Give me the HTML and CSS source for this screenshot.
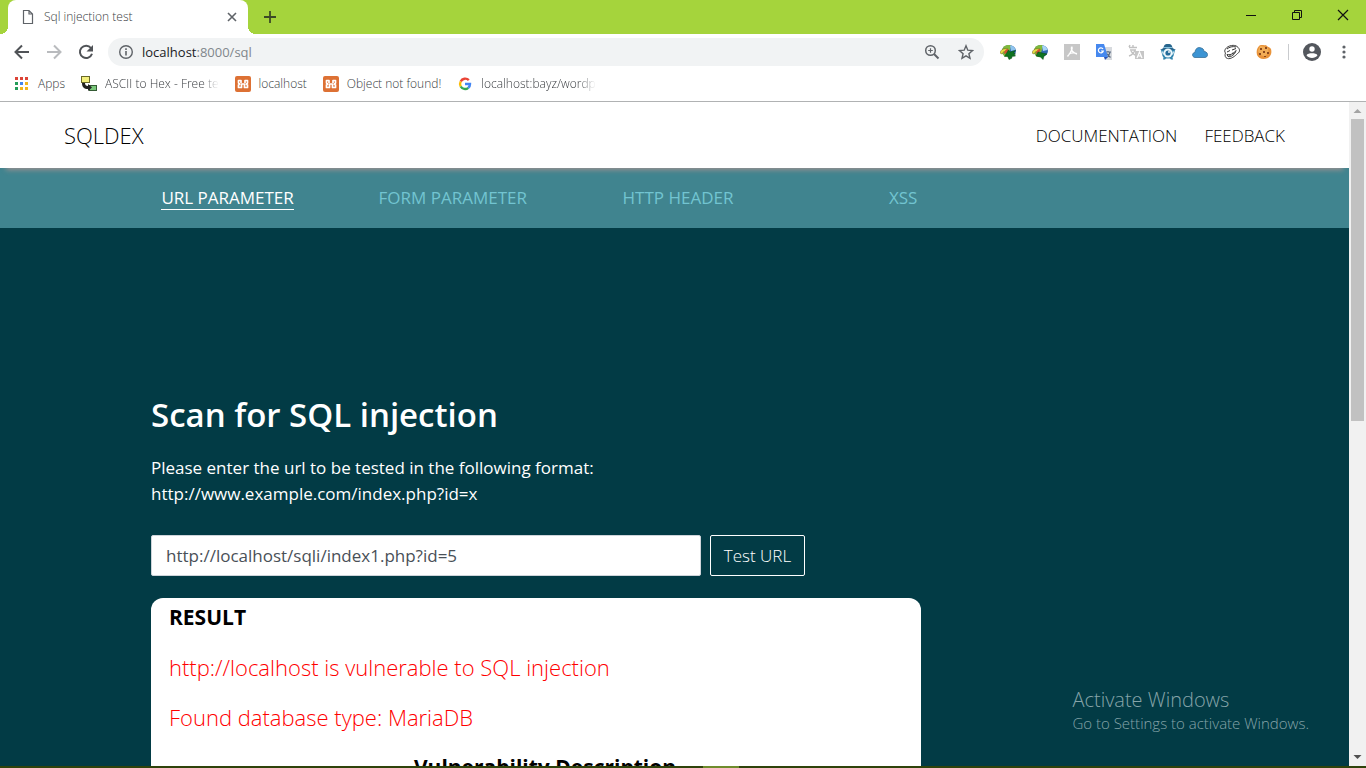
FILE: index.html
```html
<!DOCTYPE html>
<html lang="en">
<head>
<meta charset="utf-8">
<title>Sql injection test</title>
<link rel="stylesheet" href="styles.css">
</head>
<body>
<div class="titlebar">
  <div class="tab">
    <svg class="tab-file" viewBox="0 0 12 16"><path d="M1.500 1.500h5.500l3.500 3.500v9.500h-9zM7 1.500v3.500h3.500" fill="none" stroke="#5f6368" stroke-width="1.200"/></svg>
    <span class="tab-title">Sql injection test</span>
    <button class="tab-close" aria-label="Close tab"><svg viewBox="0 0 16 16"><path d="M4 4l8 8M12 4l-8 8" stroke="#5f6368" stroke-width="1.600"/></svg></button>
  </div>
  <button class="new-tab" aria-label="New tab"><svg viewBox="0 0 16 16"><path d="M8 2v12M2 8h12" stroke="#3c4a26" stroke-width="1.800"/></svg></button>
  <div class="window-buttons">
    <button aria-label="Minimize"><svg viewBox="0 0 16 16"><path d="M3 8.500h10" stroke="#111"/></svg></button>
    <button aria-label="Restore"><svg viewBox="0 0 16 16"><path d="M3.500 5.500h7v7h-7zM5.500 5.500v-2h7v7h-2" fill="none" stroke="#111"/></svg></button>
    <button aria-label="Close"><svg viewBox="0 0 16 16"><path d="M3 3l10 10M13 3L3 13" stroke="#111" stroke-width="1.200"/></svg></button>
  </div>
</div>

<div class="toolbar">
  <button class="tool" aria-label="Back"><svg viewBox="0 0 16 16"><path d="M15 8H2M8 1.500L1.500 8 8 14.500" fill="none" stroke="#505357" stroke-width="2"/></svg></button>
  <button class="tool" aria-label="Forward"><svg viewBox="0 0 16 16"><path d="M1 8h13M8 1.500L14.500 8 8 14.500" fill="none" stroke="#b9bbbe" stroke-width="2"/></svg></button>
  <button class="tool" aria-label="Reload"><svg viewBox="0 0 16 16"><path d="M13 4A6.200 6.200 0 1 0 14 9.800" fill="none" stroke="#505357" stroke-width="2"/><path d="M15 1v6.500H8.500z" fill="#505357"/></svg></button>
  <div class="omnibox">
    <svg class="icon16" viewBox="0 0 16 16"><circle cx="8" cy="8" r="6.300" fill="none" stroke="#5f6368" stroke-width="1.400"/><path d="M8 7v4.500M8 4.300v1.600" stroke="#5f6368" stroke-width="1.600"/></svg>
    <a class="address" href="#"><span class="host">localhost</span>:8000/sql</a>
    <button class="tool" aria-label="Zoom"><svg viewBox="0 0 16 16"><circle cx="6.500" cy="6.500" r="4.800" fill="none" stroke="#5f6368" stroke-width="1.500"/><path d="M10 10l4.500 4.500" stroke="#5f6368" stroke-width="2"/><path d="M4.200 6.500h4.600M6.500 4.200v4.600" stroke="#5f6368" stroke-width="1.200"/></svg></button>
    <button class="tool" aria-label="Bookmark"><svg viewBox="0 0 16 16"><path d="M8 1.800l1.800 4.400 4.700.4-3.600 3.100 1.100 4.600L8 11.800l-4 2.500 1.100-4.600-3.600-3.100 4.700-.4z" fill="none" stroke="#5f6368" stroke-width="1.400"/></svg></button>
  </div>
  <div class="extensions">
    <button class="tool" aria-label="Download manager"><svg viewBox="0 0 16 16"><ellipse cx="9" cy="7" rx="7" ry="6" fill="#2f69ad"/><path d="M2 6c1-4 5-6 9-4.500L10 6l-3 7C4 13 1.500 10 2 6z" fill="#7fb93c"/><path d="M10 1.500c3 0 5 2 5.500 4.500L11 7z" fill="#8fc4ee"/><path d="M0 9C1 5 4 4 8 5L6 8C4 7 3 8 2 10z" fill="#e6dc45" stroke="#665c19" stroke-width=".5"/><path d="M4 10C4.500 6 6 5 8.500 5L7 9z" fill="#d44f31"/><path d="M15.500 6.500L10 8 8.500 6 4.500 12.500l3-.5 1.500 3.500 3-1.500-.5-1.500 4-.5-1.500-1.500 1.500-.5-2-1z" fill="#0f7420" stroke="#07480f" stroke-width=".5"/></svg></button>
    <button class="tool" aria-label="Download page"><svg viewBox="0 0 16 16"><ellipse cx="9" cy="7" rx="7" ry="6" fill="#2f69ad"/><path d="M2 6c1-4 5-6 9-4.500L10 6l-3 7C4 13 1.500 10 2 6z" fill="#7fb93c"/><path d="M10 1.500c3 0 5 2 5.500 4.500L11 7z" fill="#a7d4f7"/><path d="M0 9C1 5 4 4 8 5L6 8C4 7 3 8 2 10z" fill="#e6dc45" stroke="#665c19" stroke-width=".5"/><path d="M4 10C4.500 6 6 5 8.500 5L7 9z" fill="#d44f31"/><path d="M6 8l9 2-3 2-1 3.500L8.500 13 4 12z" fill="#0f7420" stroke="#07480f" stroke-width=".5"/></svg></button>
    <button class="tool" aria-label="PDF"><svg viewBox="0 0 16 16"><path d="M0 0h16v16H0z" fill="#c7c7c7"/><path d="M7.500 3c1.500 0 .5 4-4 9.500M7.500 3c-1 3 1.500 6 5.500 7M4.500 10.500c2-1.500 5-2 8.500-1" fill="none" stroke="#fff" stroke-width="1.300"/></svg></button>
    <button class="tool" aria-label="Translate"><svg viewBox="0 0 16 16"><path d="M6 3h10v13h-6z" fill="#d7dade"/><path d="M9 8h6M12 7v1M14 8c-.5 3-2 4.500-4 5.500M10.500 9.500l4 4" fill="none" stroke="#5b6b83" stroke-width="1.200"/><path d="M0 0h8l4 13H0z" fill="#4688ee"/><path d="M8 13h4l-3 3z" fill="#2851b2"/><path d="M7 5A2.500 2.500 0 1 0 7.300 7H5" fill="none" stroke="#fff" stroke-width="1.200"/></svg></button>
    <button class="tool" aria-label="Page language"><svg viewBox="0 0 16 16"><path d="M1 3.500h8M5 1v2.500M2 6h6M7 6c-1 3-3 5-6 6M3 7c1 2 2 3 4 4M1 3l1-2" fill="none" stroke="#c1c1c1" stroke-width="1.400"/><rect x="7" y="7" width="9" height="8" fill="#c6c6c6"/><path d="M9 14l2.500-6 2.500 6M10 12h3" fill="none" stroke="#fff" stroke-width="1.200"/></svg></button>
    <button class="tool" aria-label="Detective"><svg viewBox="0 0 16 16"><path d="M3.500 4C4 0 6 0 8 0s4 0 4.500 4L16 6H0z" fill="#27658d"/><path d="M4 3.500h8" stroke="#83bfdd"/><path d="M1 6h14l-1.500 6-1 1.500.5 2h-2l-1-1H6l-1 1H3l.5-2-1-1.500z" fill="#3285ae"/><circle cx="8" cy="9" r="4.500" fill="#eef8fc"/><circle cx="8" cy="9" r="2.600" fill="#246b99"/><circle cx="9" cy="8" r=".9" fill="#fff"/><path d="M2.500 7.500l1 3M13.500 7.500l-1 3" stroke="#dff2fa" stroke-width="1.200"/></svg></button>
    <button class="tool" aria-label="Cloud"><svg viewBox="0 0 16 16"><path d="M3 13.500C-.5 13 0 8.500 3 8.500 3 5 6 2.500 9 4c1.500 0 3 1.500 3 3.500 4-.2 5 5.500 1 6z" fill="#3c94d3" stroke="#397098" stroke-width=".8"/></svg></button>
    <button class="tool" aria-label="Face"><svg viewBox="0 0 16 16"><path d="M1.500 5C4 1 11 .5 13 2.500c3 2 3.500 5.500.5 7-2 2.500-7 6-10 5C1 14 .5 11 1.500 9c-1-1-1-3 0-4z" fill="#fff" stroke="#444"/><path d="M3 5c2-2 6-3 9-2M3 8l3-1.500M8 6l4-1.500M3 10.500c3 1 7-1 9-4-1 4-5 7-8 6zM6 10v2M9 8.500v2" fill="none" stroke="#333"/></svg></button>
    <button class="tool" aria-label="Cookies"><svg viewBox="0 0 16 16"><path d="M3 2c2-2 5 0 7-1 1 2 4 2 5 4 1 4 0 7-3 9-5 2-9 1-11-3C0 7 1 4 3 2z" fill="#e9943b"/><path d="M4 2c3 0 5 1 8 2 1 4 0 6-3 8-4 0-6-2-7-5z" fill="#f2ae58"/><path d="M4 4h2v2H4zM9 3h2v2H9zM7 7h2v2H7zM3 9h2v2H3zM11 8h2v2h-2zM8 12h2v1H8z" fill="#8b491d"/></svg></button>
  </div>
  <span class="divider"></span>
  <button class="tool" aria-label="Profile"><svg class="profile" viewBox="0 0 18 18"><circle cx="9" cy="9" r="9" fill="#53575d"/><circle cx="9" cy="6" r="2.700" fill="#fff"/><path d="M3.500 12.300C5 9.700 13 9.700 14.500 12.300 12 16 6 16 3.500 12.300z" fill="#fff"/></svg></button>
  <button class="tool" aria-label="Menu"><svg viewBox="0 0 16 16"><g fill="#5f6368"><circle cx="8" cy="3" r="1.600"/><circle cx="8" cy="8" r="1.600"/><circle cx="8" cy="13" r="1.600"/></g></svg></button>
</div>

<div class="bookmarks">
  <a href="#"><svg class="icon16" viewBox="0 0 16 16"><g fill="#dc4437"><path d="M1 1h3v3H1zM6 1h3v3H6zM11 1h3v3h-3z"/></g><path d="M1 6h3v3H1zM1 11h3v3H1z" fill="#249c59"/><path d="M6 6h3v3H6z" fill="#4385ef"/><path d="M11 6h3v3h-3zM6 11h3v3H6zM11 11h3v3h-3z" fill="#f2b51d"/></svg><span>Apps</span></a>
  <a href="#"><svg class="icon16" viewBox="0 0 16 16"><rect x=".5" y=".5" width="8" height="6" fill="#f4ef7c" stroke="#696828"/><rect x="8.500" y="9.500" width="7" height="5" fill="#79c77a" stroke="#345b34"/><path d="M1 7h3c0 2 1 3 3 3V8l4 3.500L7 15v-2c-4 0-6-2-6-6z" fill="#222"/></svg><span class="fade">ASCII to Hex - Free te</span></a>
  <a href="#"><svg class="icon16" viewBox="0 0 16 16"><rect width="16" height="16" rx="2" fill="#dd7134"/><path d="M6 7V4.500H3.500V7l1.200 1-1.200 1v2.500h3V8h3v3.500h3V9l-1.200-1 1.200-1V4.500H10V7" fill="none" stroke="#fff" stroke-width="1.700" stroke-linejoin="round"/></svg><span>localhost</span></a>
  <a href="#"><svg class="icon16" viewBox="0 0 16 16"><rect width="16" height="16" rx="2" fill="#dd7134"/><path d="M6 7V4.500H3.500V7l1.200 1-1.200 1v2.500h3V8h3v3.500h3V9l-1.200-1 1.200-1V4.500H10V7" fill="none" stroke="#fff" stroke-width="1.700" stroke-linejoin="round"/></svg><span>Object not found!</span></a>
  <a href="#"><svg class="icon16" viewBox="0 0 16 16"><g fill="none" stroke-width="2.400"><path d="M11.800 4.200A5 5 0 0 0 3.700 5.500" stroke="#ea4335"/><path d="M3.700 5.500a5 5 0 0 0 0 5" stroke="#fbbc05"/><path d="M3.700 10.500a5 5 0 0 0 7.600 1.300" stroke="#34a853"/><path d="M11.300 11.800A5 5 0 0 0 13 8H8" stroke="#4285f4"/></g></svg><span class="fade">localhost:bayz/wordp</span></a>
</div>

<div class="viewport">
  <div class="page">
    <header class="site-header">
      <a class="brand" href="#">SQLDEX</a>
      <nav class="site-links"><a href="#">DOCUMENTATION</a><a href="#">FEEDBACK</a></nav>
    </header>
    <nav class="scan-nav">
      <div class="scan-tabs">
        <a class="active" href="#">URL PARAMETER</a>
        <a href="#">FORM PARAMETER</a>
        <a href="#">HTTP HEADER</a>
        <a href="#">XSS</a>
      </div>
    </nav>
    <main class="scan">
      <h1>Scan for SQL injection</h1>
      <p class="intro"><label for="url">Please enter the url to be tested in the following format:<br>http://www.example.com/index.php?id=x</label></p>
      <form class="scan-form">
        <input id="url" type="text" value="http://localhost/sqli/index1.php?id=5">
        <button type="button">Test URL</button>
      </form>
      <section class="result">
        <h2>RESULT</h2>
        <p>http://localhost is vulnerable to SQL injection</p>
        <p>Found database type: MariaDB</p>
        <h2 class="centered">Vulnerability Description</h2>
      </section>
    </main>
    <div class="watermark">
      <div class="watermark-title">Activate Windows</div>
      <div>Go to Settings to activate Windows.</div>
    </div>
  </div>
  <div class="scrollbar">
    <svg viewBox="0 0 17 17"><path d="M4.500 11l4-4 4 4z" fill="#a3a3a3"/></svg>
    <div class="track"><div class="thumb"></div></div>
    <svg viewBox="0 0 17 17"><path d="M4.500 6l4 4 4-4z" fill="#505050"/></svg>
  </div>
</div>
<div class="taskbar"><span></span></div>
</body>
</html>
```
FILE: styles.css
```css
* { box-sizing: border-box; }

body {
  margin: 0;
  height: 100vh;
  display: flex;
  flex-direction: column;
  overflow: hidden;
  background: #fff;
  font-family: "Open Sans", "Noto Sans", sans-serif;
  font-size: 12px;
  font-weight: 300;
  color: #3a3d41;
}

a { color: inherit; text-decoration: none; }
button { border: 0; padding: 0; background: none; font: inherit; color: inherit; }
svg { display: block; flex: none; }
h1, h2, p { margin: 0; }

.icon16, .tool svg, .window-buttons svg { width: 16px; height: 16px; }

/* Tab strip */
.titlebar {
  flex: none;
  display: flex;
  height: 34px;
  padding-left: 8px;
  background: #a5d43c;
}
.tab {
  position: relative;
  display: flex;
  align-items: center;
  gap: 10px;
  width: 240px;
  padding: 0 8px 1px 14px;
  background: #fff;
  border-radius: 8px 8px 0 0;
}
.tab::before, .tab::after {
  content: "";
  position: absolute;
  bottom: 0;
  width: 8px;
  height: 8px;
}
.tab::before { left: -8px; background: radial-gradient(circle at 0 0, #a5d43c 8px, #fff 8px); }
.tab::after { right: -8px; background: radial-gradient(circle at 100% 0, #a5d43c 8px, #fff 8px); }
.tab-file { width: 12px; height: 16px; }
.tab-title { flex: 1; }
.tab-close svg { width: 16px; height: 16px; }
.new-tab { width: 44px; display: grid; place-items: center; }
.new-tab svg { width: 16px; height: 16px; }
.window-buttons { display: flex; margin-left: auto; height: 29px; }
.window-buttons button { width: 46px; display: grid; place-items: center; }

/* Toolbar */
.toolbar {
  flex: none;
  display: flex;
  align-items: center;
  height: 36px;
  padding: 0 6px;
}
.tool { width: 32px; height: 28px; display: grid; place-items: center; }
.tool .profile { width: 18px; height: 18px; }
.omnibox {
  flex: 1;
  display: flex;
  align-items: center;
  height: 28px;
  margin: 0 8px 0 6px;
  padding: 0 1px 0 10px;
  border-radius: 14px;
  background: #f1f3f4;
}
.omnibox .tool { width: 34px; }
.address { flex: 1; padding-left: 8px; font-size: 13px; font-weight: 400; color: #80868b; }
.host { color: #202124; }
.extensions { display: flex; }
.divider { width: 1px; height: 16px; margin: 0 7px 0 8px; background: #c9cbce; }

/* Bookmarks bar */
.bookmarks {
  flex: none;
  display: flex;
  align-items: center;
  gap: 16px;
  height: 32px;
  padding: 0 14px 4px;
  border-bottom: 1px solid #b0b2b3;
}
.bookmarks a { display: flex; align-items: center; gap: 8px; white-space: nowrap; }
.fade { mask-image: linear-gradient(to right, #000 85%, transparent); }

/* Browser viewport */
.viewport { flex: 1; min-height: 0; display: flex; }
.page {
  position: relative;
  flex: 1;
  overflow: hidden;
  background: #023b45;
  color: #fff;
  font-weight: 400;
}
.scrollbar { display: flex; flex-direction: column; width: 17px; background: #f1f1f1; }
.scrollbar svg { width: 17px; height: 17px; }
.track { flex: 1; padding: 0 2px; }
.thumb { height: 48%; background: #c1c1c1; }

.site-header {
  position: relative;
  z-index: 1;
  display: flex;
  align-items: center;
  justify-content: space-between;
  height: 66px;
  padding: 0 64px;
  background: #fff;
  color: #000;
  box-shadow: 0 8px 5px -6px #9b9090;
}
.brand { font-size: 22px; font-weight: 300; }
.site-links { display: flex; gap: 27px; font-size: 17px; font-weight: 300; }

.scan-nav { height: 60px; padding-left: 115px; background: #40848f; }
.scan-tabs {
  display: grid;
  grid-template-columns: repeat(4, 1fr);
  align-items: center;
  justify-items: center;
  width: 73%;
  height: 60px;
  font-size: 17px;
  line-height: 22px;
  color: #72c4d1;
}
.scan-tabs .active { color: #fff; border-bottom: 1px solid #fff; }

.scan { width: 921px; max-width: 100%; padding: 162px 0 0 151px; }
.scan h1 { font-size: 33px; font-weight: 600; line-height: 50px; }
.intro { margin-top: 15px; font-size: 17px; line-height: 26px; }
.scan-form { display: flex; gap: 9px; margin-top: 28px; }
.scan-form input, .scan-form button {
  height: 41px;
  border: 1px solid #fff;
  border-radius: 2px;
  font-family: inherit;
  font-size: 17px;
}
.scan-form input {
  width: 550px;
  padding: 0 14px;
  border-color: #ced4da;
  background: #fff;
  color: #495057;
}
.scan-form button { width: 95px; color: #fff; font-weight: 300; }

.result {
  display: flex;
  flex-direction: column;
  gap: 15px;
  margin-top: 22px;
  padding: 2px 0 40px 18px;
  border-radius: 12px;
  background: #fff;
  color: #f00;
  font-size: 22px;
  font-weight: 300;
  line-height: 35px;
}
.result h2 { font-size: 21px; font-weight: 700; color: #000; }
.result .centered { text-align: center; }

.watermark {
  position: absolute;
  right: 40px;
  bottom: 33px;
  font-size: 15px;
  font-weight: 300;
  line-height: 20px;
  color: #86a4a9;
}
.watermark-title { font-size: 20px; line-height: 26px; }

.taskbar { flex: none; height: 2px; background: #2f430b; }
.taskbar span { display: block; width: 36px; height: 2px; margin-left: 703px; background: #6f8c2d; }
```
